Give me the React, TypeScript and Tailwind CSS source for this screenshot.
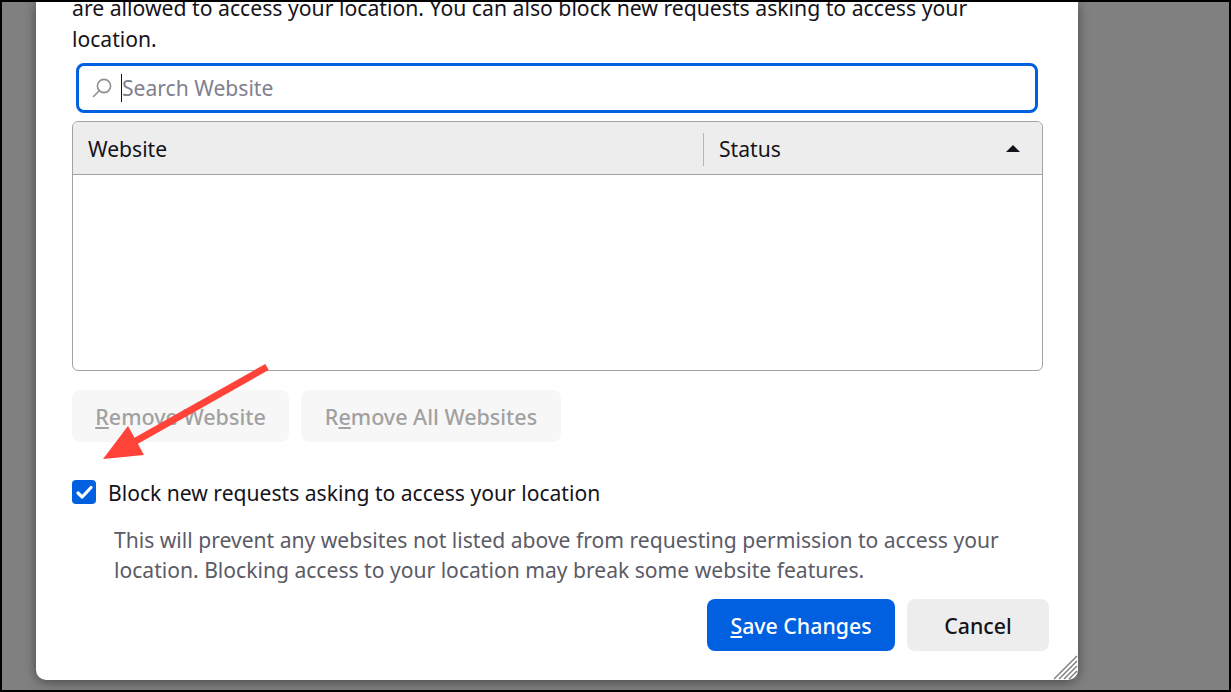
const FONT = "font-['Noto_Sans','Open_Sans',sans-serif]";

function Arrow() {
  return (
    <svg className="absolute left-[64px] top-[360px]" width="172" height="102" viewBox="0 0 172 102">
      <path d="M167 5 L34 80" stroke="#ff4338" strokeWidth="7" fill="none" />
      <path d="M3 97 L28 64 L44 93 Z" fill="#ff4338" />
    </svg>
  );
}

function Resizer() {
  return (
    <svg className="absolute bottom-0 right-0" width="25" height="25" viewBox="0 0 25 25" stroke="#7f7f7f" strokeWidth="1.5">
      <path d="M1 24 L24 1" />
      <path d="M6 24 L24 6" />
      <path d="M11 24 L24 11" />
      <path d="M16 24 L24 16" />
      <path d="M21 24 L24 21" />
    </svg>
  );
}

function SearchIcon() {
  return (
    <svg width="20" height="20" viewBox="0 0 20 20" fill="none" stroke="#8f8f8f" strokeWidth="1.6" strokeLinecap="round">
      <circle cx="12" cy="8" r="6.6" />
      <path d="M7.2 12.8 L1.5 18.5" />
    </svg>
  );
}

export default function App() {
  return (
    <div className={`${FONT} h-[692px] w-[1231px] overflow-hidden border-y-2 border-x-2 border-black bg-[#808080]`}>
      <div className="relative ml-[34px] flow-root h-[678px] w-[1042px] rounded-b-[10px] bg-white pl-[36px] pr-[35px] text-[21.1px] text-[#15141a] shadow-[0_2px_12px_rgba(0,0,0,0.45)]">
        <p className="-mt-[10px] whitespace-nowrap text-[21.2px] leading-[31px]">
          are allowed to access your location. You can also block new requests asking to access your
        </p>
        <p className="leading-[31px]">location.</p>
        <div className="ml-[4px] mr-[5px] mt-[9px] flex h-[50px] items-center rounded-[8px] border-[3px] border-[#0060df] pl-[13px]">
          <SearchIcon />
          <span className="ml-[9px] h-[28px] w-px bg-[#15141a]" />
          <span className="text-[#80808e]">Search Website</span>
        </div>
        <div className="mt-[8px] h-[250px] rounded-[6px] border border-[#a3a3a3]">
          <div className="flex h-[53px] items-center rounded-t-[6px] border-b border-[#a3a3a3] bg-[#ededed] pt-[2px]">
            <span className="w-[630px] pl-[15px]">Website</span>
            <span className="h-[33px] w-px bg-[#b5b5b5]" />
            <span className="ml-[15px]">Status</span>
            <span className="mb-[2px] ml-auto mr-[22px] h-0 w-0 border-x-[7px] border-b-[7px] border-x-transparent border-b-[#15141a]" />
          </div>
        </div>
        <div className="mt-[19px] flex gap-[12px] text-[21.5px] text-[#a1a1a1]">
          <button className="h-[52px] w-[217px] rounded-[8px] bg-[#f7f7f7] pt-[2px] font-medium">
            <u>R</u>emove Website
          </button>
          <button className="h-[52px] w-[260px] rounded-[8px] bg-[#f7f7f7] pt-[2px] font-medium">
            R<u>e</u>move All Websites
          </button>
        </div>
        <div className="mt-[36px] flex h-[28px] items-center gap-[12px]">
          <span className="flex h-[24px] w-[24px] items-center justify-center rounded-[4px] bg-[#0060df]">
            <svg width="17" height="15" viewBox="0 0 17 15" fill="none" stroke="white" strokeWidth="3.2" strokeLinecap="round" strokeLinejoin="round">
              <path d="M2 8 L6.2 12 L15 2.5" />
            </svg>
          </span>
          <span className="pt-[2px] leading-[26px]">Block new requests asking to access your location</span>
        </div>
        <p className="ml-[42px] mt-[19px] whitespace-nowrap leading-[30px] text-[#5b5b66]">
          This will prevent any websites not listed above from requesting permission to access your
          <br />
          location. Blocking access to your location may break some website features.
        </p>
        <div className="mr-[-6px] mt-[14px] flex justify-end gap-[12px] text-[21.3px] font-medium">
          <button className="h-[52px] w-[188px] rounded-[8px] bg-[#0060df] pt-[2px] text-white">
            <u>S</u>ave Changes
          </button>
          <button className="h-[52px] w-[142px] rounded-[8px] bg-[#ededed] pt-[2px]">Cancel</button>
        </div>
        <Resizer />
        <Arrow />
      </div>
    </div>
  );
}
